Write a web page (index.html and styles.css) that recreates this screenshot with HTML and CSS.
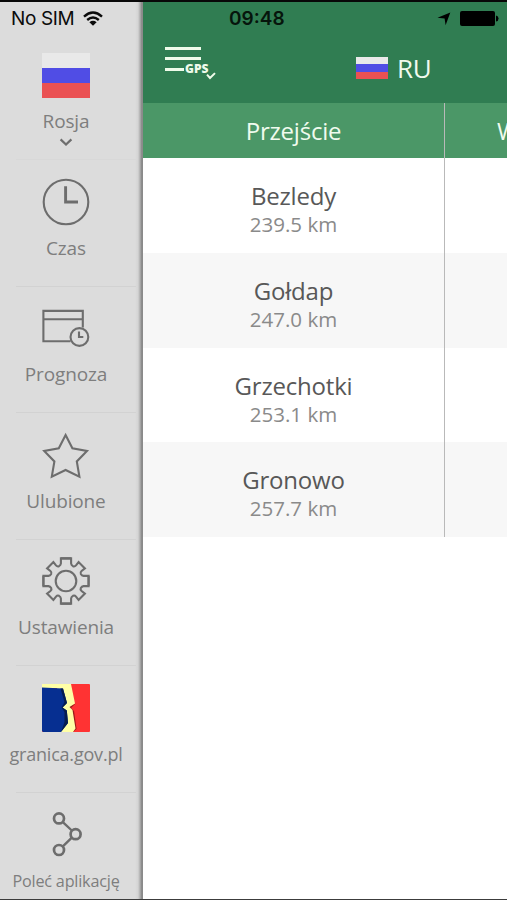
FILE: index.html
```html
<!DOCTYPE html>
<html lang="pl">
<head>
<meta charset="utf-8">
<title>Granica</title>
<link rel="stylesheet" href="styles.css">
</head>
<body>
<div class="app">
  <aside class="side">
    <div class="status-left">
      <span>No SIM</span>
      <svg class="wifi" viewBox="0 0 20 15"><g fill="none" stroke="#0b0b0b" stroke-width="2.4"><path d="M1 5.6Q10-2.4 19 5.6"/><path d="M4.2 9Q10 4 15.8 9"/></g><path fill="#0b0b0b" d="M6.4 11.2Q10 8.4 13.6 11.2L10 14.8Z"/></svg>
    </div>
    <div class="country">
      <div class="flag"><i></i><i></i><i></i></div>
      <span class="label">Rosja</span>
      <svg class="chev" viewBox="0 0 14 8"><path d="M1.6 1.4L7 6.5L12.4 1.4" fill="none" stroke="#6e6e6e" stroke-width="2.2"/></svg>
    </div>
    <nav class="menu">
      <a class="item"><svg class="icon" viewBox="0 0 48 48"><circle cx="24" cy="24" r="22.3"/><path d="M23.6 8.2V24H36" stroke-width="2.9"/></svg><span class="label">Czas</span></a>
      <a class="item"><svg class="icon" viewBox="0 0 48 48"><path d="M28.5 37.3H1.4V6.9H40.8V23.6M1.4 15.2H40.8"/><circle cx="37.4" cy="33" r="8.9"/><path d="M37 27.6V33H41.3"/></svg><span class="label">Prognoza</span></a>
      <a class="item"><svg class="icon" viewBox="0 0 48 48"><path d="M23.6 4L30.4 17.2L45 20L34.8 30.4L37.4 45.6L23.6 39L9.8 45.6L12.4 30.4L2.2 20L16.8 17.2Z"/></svg><span class="label">Ulubione</span></a>
      <a class="item"><svg class="icon" viewBox="0 0 48 48"><defs><path id="cog" d="M5.1-22.6H-5.1V-17.5Q-5.3-15.8-7-14.8Q-8.6-14-10-15.6L-12.6-18.9L-18.9-12.6L-15.6-10Q-14-8.6-14.8-7Q-15.8-5.3-17.5-5.1H-22.6V5.1"/></defs><g transform="translate(24 24)"><use href="#cog"/><use href="#cog" transform="rotate(90)"/><use href="#cog" transform="rotate(180)"/><use href="#cog" transform="rotate(270)"/><circle r="10.3"/></g></svg><span class="label">Ustawienia</span></a>
      <a class="item"><svg class="emblem" viewBox="0 0 48 48"><rect width="48" height="48" rx="1" fill="#f33"/><path fill="#9c1a1a" d="M27 22L33.5 19.5L29 24L32 27L34.6 45L31 48H28Z"/><path fill="#ffffa6" d="M0 0H29L33 19.5L27.5 23L30.5 26L33.5 44.5L31 48H15V4H0Z"/><path fill="#062f91" d="M0 3.6L21 4.6L25 19L20.5 23.5L24.8 26.5L26 39L19 48H1L0 47Z"/><path fill="#071d50" d="M18.5 4.6L21 4.6L25 19L20.5 23.5L24.8 26.5L26 39L19 48L22.5 38L22.5 28L19.5 23.5L22.5 18Z"/></svg><span class="label url">granica.gov.pl</span></a>
      <a class="item"><svg class="icon" viewBox="0 0 48 48"><path d="M21.1 12.3L29.8 20.5M21.1 36.1L29.8 27.6" stroke-width="2.4"/><g stroke-width="2.7"><circle cx="17" cy="8.4" r="5"/><circle cx="33.6" cy="24.2" r="5"/><circle cx="17" cy="40" r="5"/></g></svg><span class="label small">Poleć aplikację</span></a>
    </nav>
  </aside>
  <main class="main">
    <header class="bar">
      <div class="status-right">
        <b class="time">09:48</b>
        <svg class="loc" viewBox="0 0 14 14"><path d="M13.3.5L8.6 13.3L7.6 6.5L.5 5.7Z"/></svg>
        <svg class="battery" viewBox="0 0 39 15"><rect width="35" height="15" rx="2"/><path d="M36 4.5Q38.5 5 38.5 7.5Q38.5 10 36 10.5Z"/></svg>
      </div>
      <div class="title-row">
        <div class="burger"><i></i><i></i><div class="gps"><i></i><span>GPS</span><svg viewBox="0 0 10 8"><path d="M1 2.7L4 6L9 1.1" fill="none" stroke="#effbea" stroke-width="2"/></svg></div></div>
        <div class="title"><div class="flag mini"><i></i><i></i><i></i></div><span>RU</span></div>
      </div>
    </header>
    <div class="table">
      <div class="col">
        <div class="head">Przejście</div>
        <div class="row"><span class="name">Bezledy</span><span class="km">239.5 km</span></div>
        <div class="row"><span class="name">Gołdap</span><span class="km">247.0 km</span></div>
        <div class="row"><span class="name">Grzechotki</span><span class="km">253.1 km</span></div>
        <div class="row"><span class="name">Gronowo</span><span class="km">257.7 km</span></div>
      </div>
      <div class="col next">
        <div class="head">W</div>
        <div class="row"></div><div class="row"></div><div class="row"></div><div class="row"></div>
      </div>
    </div>
  </main>
</div>
</body>
</html>
```
FILE: styles.css
```css
* { box-sizing: border-box; }
body { margin: 0; font-family: "Open Sans", "Noto Sans", sans-serif; }
svg { display: block; flex: none; }
.app { display: flex; width: 507px; height: 900px; overflow: hidden; border-top: 2px solid #080808; border-bottom: 1px solid #3c3c3c; background: #fff; }
.side { width: 143px; height: 897px; flex: none; display: flex; flex-direction: column; background: linear-gradient(to right, #dcdcdc 0 135px, #d4d4d4 138px, #b0b0b0 140px, #828282 142px, #929292 143px); }
.status-left { height: 33px; flex: none; display: flex; align-items: center; gap: 9px; padding-left: 11px; font: 19px/33px Inter, "Liberation Sans", sans-serif; letter-spacing: -.35px; color: #0b0b0b; }
.wifi { width: 20px; height: 15px; }
.country { height: 124.3px; flex: none; padding: 18px 11px 0 0; display: flex; flex-direction: column; align-items: center; }
.flag { width: 48px; height: 45px; display: flex; flex-direction: column; }
.flag i { flex: 1; background: #e9e9e9; }
.flag i:nth-child(2) { background: #504de5; }
.flag i:nth-child(3) { background: #ea5153; }
.label { font-size: 19px; line-height: 26px; letter-spacing: -.15px; color: #7e7e7e; white-space: nowrap; }
.label.url { font-size: 18px; letter-spacing: -.2px; }
.label.small { font-size: 16.2px; line-height: 28px; letter-spacing: -.2px; }
.country .label { margin-top: 10px; }
.chev { width: 14px; height: 8px; margin-top: 4px; }
.menu { display: flex; flex-direction: column; }
.item { height: 126.5px; flex: none; padding: 18.5px 11px 0 0; display: flex; flex-direction: column; align-items: center; background: linear-gradient(#d2d2d2, #d2d2d2) 16px 0 / 120px 1px no-repeat; }
.item:first-child { background: linear-gradient(#d8d8d8, #d8d8d8) 16px 0 / 120px 1px no-repeat; }
.item .label { margin-top: 9px; }
.icon, .emblem { width: 48px; height: 48px; }
.icon { fill: none; stroke: #6d6d6d; stroke-width: 2.1; }
.main { flex: 1; min-width: 0; overflow: hidden; }
.bar { height: 101px; background: #307d52; }
.status-right { height: 33px; display: flex; align-items: center; color: #06150c; }
.time { width: 57px; margin-left: 86px; font: 600 19px/33px Inter, "Liberation Sans", sans-serif; }
.loc { width: 14px; height: 14px; margin-left: 151px; }
.battery { width: 39px; height: 15px; margin-left: 9px; }
.title-row { display: flex; height: 68px; }
.burger { margin: 12px 0 0 22px; width: 52px; display: flex; flex-direction: column; gap: 7.3px; }
.burger i { width: 36px; height: 3px; background: #effbea; flex: none; }
.gps { display: flex; height: 3px; align-items: center; }
.gps .burger i, .gps i { width: 19px; }
.burger .gps i { width: 19px; }
.gps span { margin-left: 1px; font-size: 12px; line-height: 14px; font-weight: 800; color: #effbea; }
.gps svg { width: 10px; height: 8px; margin: 14px 0 0 -2px; }
.title { display: flex; margin: 15px 0 0 139px; gap: 9px; height: 36px; align-items: center; font-size: 26px; letter-spacing: -.3px; color: #f1faee; }
.flag.mini { width: 32px; height: 22px; }
.table { display: flex; }
.col { width: 302px; flex: none; border-right: 1.5px solid #b9b9b9; }
.head { height: 55px; background: #4b9767; color: #f0fbee; font-size: 24px; line-height: 56px; letter-spacing: -.2px; text-align: center; }
.row { height: 94.8px; display: flex; flex-direction: column; align-items: center; padding-top: 22px; background: #fff; }
.row:nth-child(odd) { background: #f7f7f7; }
.name { font-size: 24px; line-height: 32px; letter-spacing: -.2px; color: #585858; }
.km { font-size: 20.5px; line-height: 25px; color: #8a8a8a; }
.next .head { text-align: left; padding-left: 52px; }
```
